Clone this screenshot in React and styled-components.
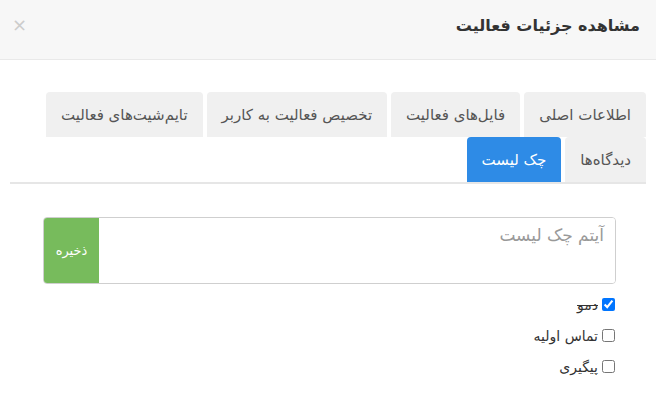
import React, { useState } from 'react'
import styled, { createGlobalStyle } from 'styled-components'

const GlobalStyle = createGlobalStyle`
  body {
    margin: 0;
    background: #fff;
    font-family: "DejaVu Sans", "Noto Sans", sans-serif;
    direction: rtl;
  }
`

const Modal = styled.div`
  width: 656px;
  height: 393px;
  background: #fff;
  overflow: hidden;
`

const Header = styled.div`
  height: 50px;
  display: flex;
  align-items: center;
  justify-content: space-between;
  padding: 0 16px 9px;
  background: #f7f7f7;
  border-bottom: 1px solid #e9e9e9;
`

const Title = styled.h4`
  margin: 0;
  font-size: 16px;
  font-weight: bold;
  color: #333;
`

const Close = styled.span`
  font-size: 18px;
  color: #cccccc;
  font-family: "DejaVu Sans", sans-serif;
  line-height: 1;
  margin-left: -4px;
`

const Body = styled.div`
  padding: 32px 10px 0;
`

const Tabs = styled.div`
  display: flex;
  flex-wrap: wrap;
  column-gap: 4px;
  border-bottom: 2px solid #e6e6e6;
`

const Tab = styled.div`
  height: 45px;
  padding: 0 15px;
  display: flex;
  align-items: center;
  font-size: 15px;
  white-space: nowrap;
  border-radius: 4px 4px 0 0;
  background: ${p => (p.active ? '#2e8be6' : '#f0f0f0')};
  color: ${p => (p.active ? '#fff' : '#555')};
`

const Content = styled.div`
  padding: 33px 30px 0 33px;
`

const InputGroup = styled.div`
  display: flex;
  height: 65px;
  border: 1px solid #cfcfcf;
  border-radius: 4px;
  overflow: hidden;
`

const TextArea = styled.textarea`
  flex: 1;
  border: none;
  resize: none;
  outline: none;
  padding: 7px 11px;
  font-family: inherit;
  font-size: 17px;
  color: #333;
  &::placeholder {
    color: #999;
  }
`

const SaveButton = styled.button`
  width: 55px;
  border: none;
  background: #77bb5c;
  color: #fff;
  font-family: inherit;
  font-size: 13px;
`

const CheckList = styled.div`
  padding: 10px 1px 0;
  display: flex;
  flex-direction: column;
  gap: 10px;
`

const Item = styled.label`
  display: flex;
  align-items: center;
  gap: 2px;
  font-size: 14px;
  color: #333;
  text-decoration: ${p => (p.done ? 'line-through' : 'none')};
  height: 21px;
`

const Box = styled.input`
  margin: 0 0 0 2px;
  width: 13px;
  height: 13px;
`

const tabs = [
  'اطلاعات اصلی',
  'فایل‌های فعالیت',
  'تخصیص فعالیت به کاربر',
  'تایم‌شیت‌های فعالیت',
  'دیدگاه‌ها',
  'چک لیست',
]

export default function App() {
  const [items, setItems] = useState([
    { title: 'دمو', done: true },
    { title: 'تماس اولیه', done: false },
    { title: 'پیگیری', done: false },
  ])

  const toggle = i =>
    setItems(items.map((it, j) => (j === i ? { ...it, done: !it.done } : it)))

  return (
    <>
      <GlobalStyle />
      <Modal>
        <Header>
          <Title>مشاهده جزئیات فعالیت</Title>
          <Close>×</Close>
        </Header>
        <Body>
          <Tabs>
            {tabs.map(t => (
              <Tab key={t} active={t === 'چک لیست'}>{t}</Tab>
            ))}
          </Tabs>
          <Content>
            <InputGroup>
              <TextArea placeholder="آیتم چک لیست" />
              <SaveButton>ذخیره</SaveButton>
            </InputGroup>
            <CheckList>
              {items.map((it, i) => (
                <Item key={it.title} done={it.done}>
                  <Box type="checkbox" checked={it.done} onChange={() => toggle(i)} />
                  {it.title}
                </Item>
              ))}
            </CheckList>
          </Content>
        </Body>
      </Modal>
    </>
  )
}
